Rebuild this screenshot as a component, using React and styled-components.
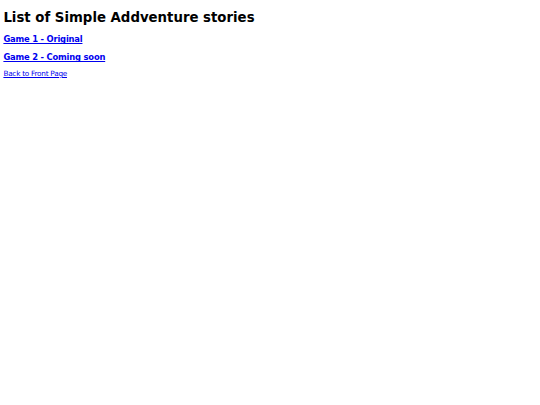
import React from "react";
import styled, { createGlobalStyle } from "styled-components";

const GlobalStyle = createGlobalStyle`
  html, body {
    margin: 0;
    padding: 0;
    background: #ffffff;
  }
  body {
    font-family: "DejaVu Sans", sans-serif;
    font-size: 7px;
    color: #000000;
  }
`;

const Page = styled.div`
  display: flex;
  flex-direction: column;
  align-items: flex-start;
  padding: 11px 0 0 3.4px;
`;

const Title = styled.h1`
  font-size: 13.3px;
  font-weight: bold;
  margin: 0;
  line-height: 13.3px;
`;

const GameList = styled.div`
  display: flex;
  flex-direction: column;
  align-items: flex-start;
  gap: 10px;
  margin-top: 11.2px;
`;

const GameLink = styled.a`
  display: block;
  font-size: 8.4px;
  font-weight: bold;
  letter-spacing: -0.2px;
  color: #0000ee;
  text-decoration: underline;
  text-decoration-thickness: 1px;
  line-height: 8px;
`;

const BackLink = styled.a`
  display: inline-block;
  margin-top: 7.5px;
  font-size: 7.3px;
  letter-spacing: -0.25px;
  color: #0000ee;
  text-decoration: underline;
  text-decoration-thickness: 1px;
  text-underline-offset: 1px;
  line-height: 10px;
`;

export default function App() {
  return (
    <>
      <GlobalStyle />
      <Page>
        <Title>List of Simple Addventure stories</Title>
        <GameList>
          <GameLink href="#">Game 1 - Original</GameLink>
          <GameLink href="#">Game 2 - Coming soon</GameLink>
        </GameList>
        <BackLink href="#">Back to Front Page</BackLink>
      </Page>
    </>
  );
}
